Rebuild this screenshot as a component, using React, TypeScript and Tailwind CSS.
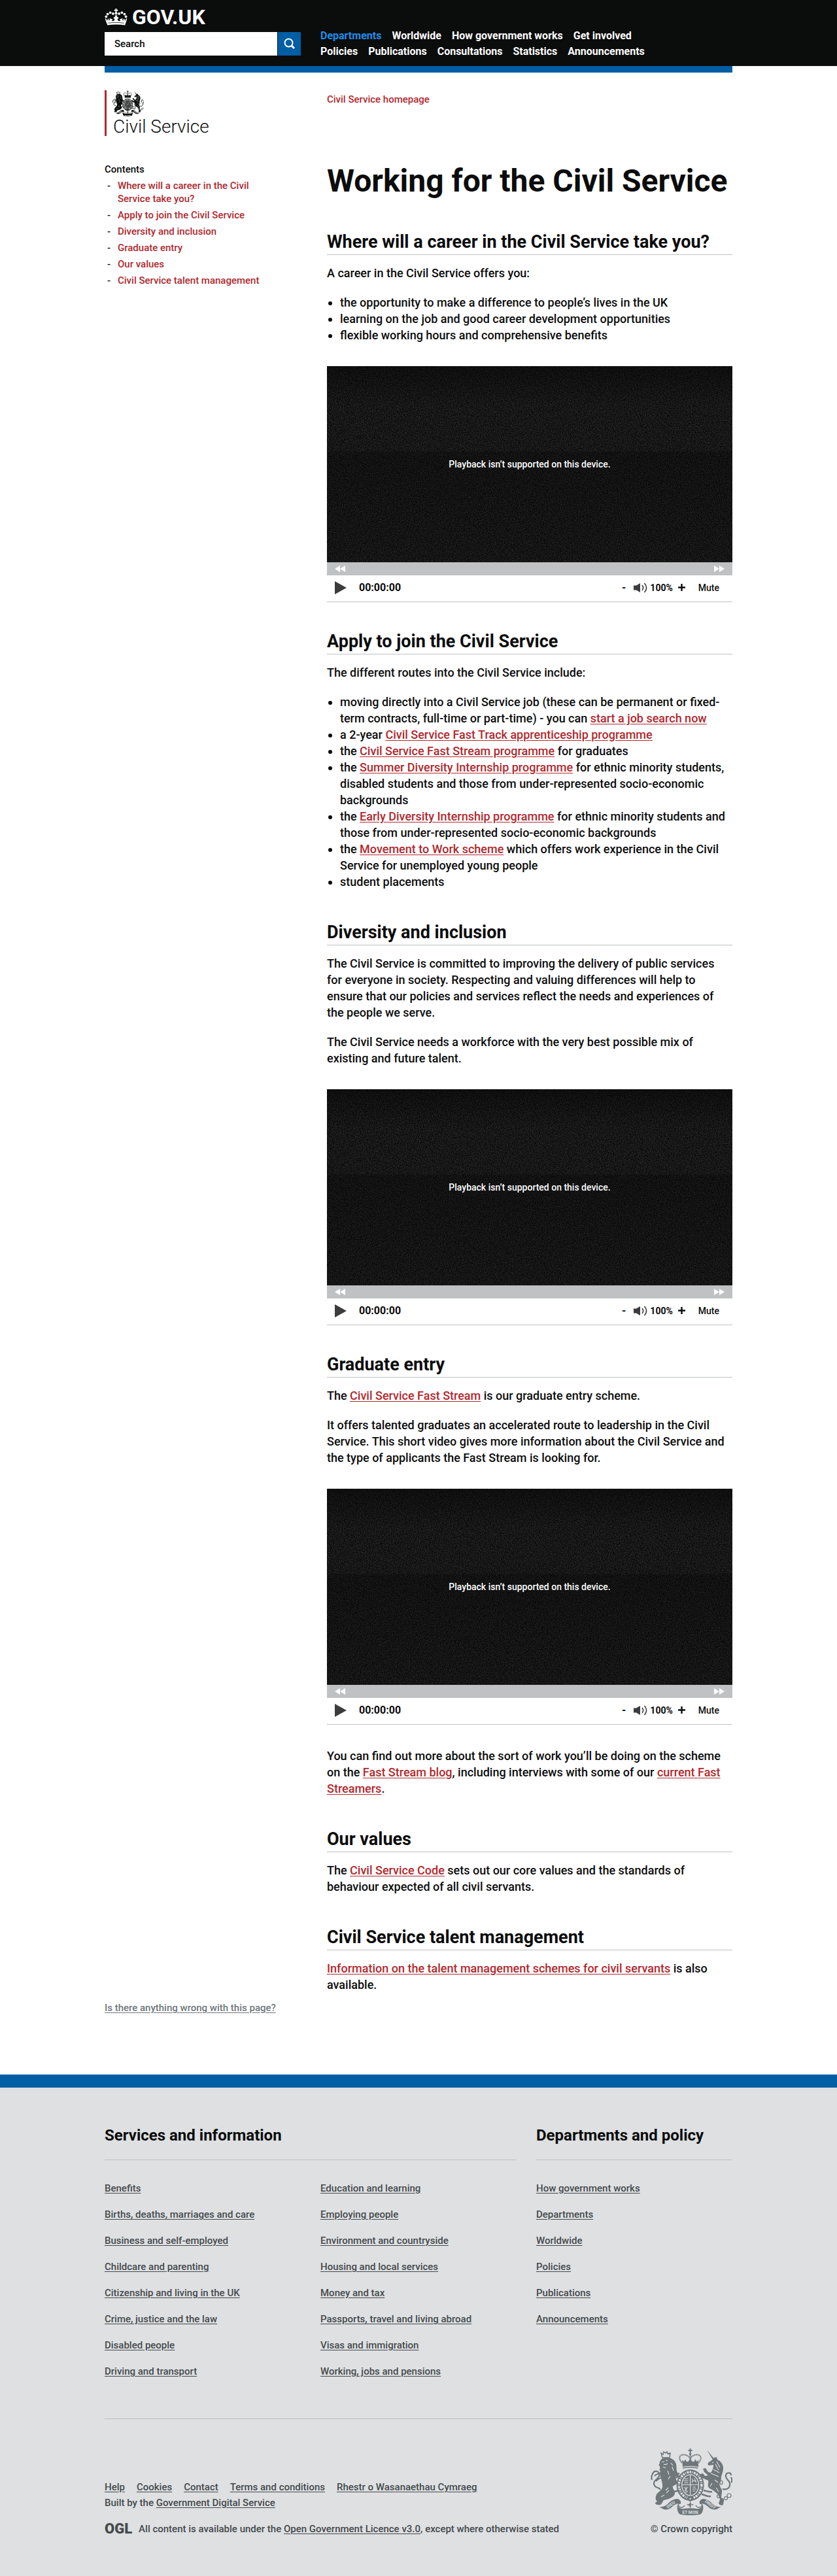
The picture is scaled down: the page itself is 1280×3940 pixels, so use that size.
import { useId, type ReactNode } from 'react';

const contents = [
  'Where will a career in the Civil Service take you?',
  'Apply to join the Civil Service',
  'Diversity and inclusion',
  'Graduate entry',
  'Our values',
  'Civil Service talent management',
];

const navRows = [
  ['Departments', 'Worldwide', 'How government works', 'Get involved'],
  ['Policies', 'Publications', 'Consultations', 'Statistics', 'Announcements'],
];

const services = [
  [
    'Benefits',
    'Births, deaths, marriages and care',
    'Business and self-employed',
    'Childcare and parenting',
    'Citizenship and living in the UK',
    'Crime, justice and the law',
    'Disabled people',
    'Driving and transport',
  ],
  [
    'Education and learning',
    'Employing people',
    'Environment and countryside',
    'Housing and local services',
    'Money and tax',
    'Passports, travel and living abroad',
    'Visas and immigration',
    'Working, jobs and pensions',
  ],
];

const policy = ['How government works', 'Departments', 'Worldwide', 'Policies', 'Publications', 'Announcements'];

const meta = ['Help', 'Cookies', 'Contact', 'Terms and conditions', 'Rhestr o Wasanaethau Cymraeg'];

function Crown() {
  return (
    <svg viewBox="0 0 35 26" className="h-[26px] w-[35px]" fill="#fff" aria-hidden="true">
      <path d="M16.4 0h2.2l-.4 2 2-.4v2.3l-2-.4.4 2.4h-2.2l.4-2.4-2 .4V1.600l2 .4z" />
      <circle cx="17.500" cy="7.600" r="2" />
      <circle cx="12.900" cy="7.900" r="1.900" />
      <circle cx="22.100" cy="7.900" r="1.900" />
      <circle cx="8.600" cy="6.300" r="1.900" />
      <circle cx="26.400" cy="6.300" r="1.900" />
      <circle cx="4.600" cy="8.600" r="1.900" />
      <circle cx="30.400" cy="8.600" r="1.900" />
      <circle cx="2.400" cy="12.400" r="1.900" />
      <circle cx="32.600" cy="12.400" r="1.900" />
      <path d="M1 14.500c1.500 1 2.200 2.600 2.900 5.100.2-1.600.3-3 1.600-4.300.9.900 1.100 2 .7 3.300.9-.2 1.500-.7 2-1.500-.8-.4-.7-1.600 0-2 1 0 1.400.5 1.500 1.300.8-.5 1.600-.6 2.100.2.500 1-.3 1.800-1.300 1.500.3 1 1.700 1.600 3.400.8 1-.7 1.500-1.800 1.500-3.300l-1.400.4v-3.200l2.100.6-.4-3h3.600l-.4 3 2.100-.6V16l-1.400-.4c0 1.500.5 2.600 1.500 3.300 1.700.8 3.100.2 3.400-.8-1 .3-1.800-.5-1.300-1.500.5-.8 1.300-.7 2.100-.2.100-.8.500-1.300 1.500-1.300.7.4.8 1.600 0 2 .5.800 1.100 1.300 2 1.500-.4-1.300-.2-2.400.7-3.300 1.300 1.300 1.400 2.700 1.600 4.300.7-2.500 1.400-4.100 2.900-5.100.2 3.700-1.700 6.600-2.800 11-8.800-1.300-18-1.300-26.800 0C2.800 21.100.8 18.200 1 14.500z" />
      <path d="M5.500 22.300c8-1.200 16-1.200 24 0" fill="none" stroke="#0b0c0c" strokeWidth=".8" />
    </svg>
  );
}

/* Royal coat of arms: lion and unicorn holding a crowned garter above the motto scroll. */
function Crest({ className, ground }: { className: string; ground: string }) {
  return (
    <svg viewBox="0 0 125 102" className={className} fill="currentColor" aria-hidden="true">
      {/* crown */}
      <path d="M59.600 0h2v2h2v2h-2v3h-2V4h-2V2h2z" />
      <circle cx="60.600" cy="8.500" r="1.800" />
      <path
        d="M48 22c-7-8-3-13 3-12.500 4 .3 8 2.500 9.600 6C62.200 12 66 9.800 70 9.500c6-.5 10 4.500 3.200 12.500M60.600 10v13"
        fill="none"
        stroke="currentColor"
        strokeWidth="2"
        strokeDasharray="1.800 .7"
      />
      <path d="M48.500 22.500l-.5-5 3 2.500 2-3.500 2 4 3-1 2.600-4.500 2.600 4.500 3 1 2-4 2 3.500 3-2.500-.5 5 .5 5.500c-8-1.600-16.200-1.600-24.200 0z" />
      <path d="M49 30c8-1.800 15.500-1.800 23.500 0" fill="none" stroke="currentColor" strokeWidth="1.600" />
      {/* garter and shield */}
      <ellipse cx="60.600" cy="56" rx="21" ry="24" />
      <ellipse cx="60.600" cy="56" rx="17.300" ry="20" fill="none" stroke={ground} strokeWidth="3.400" strokeDasharray="2.600 1.600 1 1.400 3 1.200" />
      <ellipse cx="60.600" cy="56" rx="13.500" ry="16.500" fill={ground} />
      <ellipse cx="60.600" cy="56" rx="12.200" ry="15.200" />
      <path d="M60.600 41v30M48.500 55.500h24.200" stroke={ground} strokeWidth="1.200" />
      <path
        d="M51.500 46.500h6M50.500 49.500h7M51.500 52.500h6M64 46v7M67 45.500l2.500 7M64 49.500h6M64 59h5M64 62h6M64 65h4M51 59l6 8M54 58v10M57 59l-5 6"
        fill="none"
        stroke={ground}
        strokeWidth="1"
      />
      <path d="M55 76l5.600 6 5.600-6-2-2h-7.200z" />
      <circle cx="60.600" cy="77" r="1.200" fill={ground} />
      {/* lion */}
      <path d="M18 14l-2-7 3 2 1-4 3 2 2-2 1 3 4-1-1 7z" fill="none" stroke="currentColor" strokeWidth="1.500" />
      <path d="M18 15c4-1.500 9-1.600 13 0 4 1.500 7 5 8 9 1 5 0 9 2 13 1 2 3 4 2 6-2 1-4-1-5 0l1 5c2 2 2 5 0 7-2 1.500-4 1-5 3-1 3 3 6 3 10 0 5-5 7-9 9l-8 2c-2 2-2 5-5 7-3 .5-7 .2-8-2 0-2 2-2 3-3-2-2-3-5-2-8 1-5 6-7 9-11 2-4 1-8 0-12-1-6-4-10-2-16l-2-1c2-2 1-4 1-6-2-1-2-3 0-4-1-3 1-5 4-8z" />
      <path d="M17 21l4-1M20 24c2 1 4 1 6-1M23 18l3 1M19 28l4 2M26 34l2 6M33 28l2 6M30 42l-3 5M27 60l-4 4M16 74l5-3M24 68l4-4M31 22l3 4" fill="none" stroke={ground} strokeWidth="1.100" />
      <path d="M20 38c-6-1-10 0-14 4M19 44c-5 1-8 3-11 6" fill="none" stroke="currentColor" strokeWidth="2" />
      <path d="M2 48C0 42 4 33 10 35c5 2 4 8 0 11-5 4-7 8-3 12 3 3 6 1 8 5" fill="none" stroke="currentColor" strokeWidth="2.200" />
      <path d="M44 38l-8 3M44 42l-6 3M44 64l-8 2" stroke="currentColor" strokeWidth="2.500" />
      {/* unicorn */}
      <path d="M86 2l13 16-2.500 1.500z" />
      <path d="M98 14l3-1 1 4c5 2 9 7 9 13 0 5-2 9-3 13 0 5-1 8-3 11l2 6c4 4 1 10 1 15l4 4-1 7c-3 2-6 0-7-2l2-6-3-8-6-5c-3-3-8-3-9-7-1-3 1-6 0-9l-7-3c-3-1-5-4-5-7l4-1 3 4 5-1-6-5-2-5 4-1 4 6 4 1c3-4 4-8 4-12l-7 1c-2-1-2-4 0-5 4-2 6-5 9-8z" />
      <path d="M94 22l2-1M101 20l5 9M99 24l5 9M96 32l9 5M92 38l12 5M98 48l5 4M94 53l-3 5M100 60l4 6" fill="none" stroke={ground} strokeWidth="1.100" />
      <path d="M110 62c8 2 12-3 11-9-1-5-7-6-6-12 1-5 8-5 8 0M123 44c2 4 1 7 0 8" fill="none" stroke="currentColor" strokeWidth="2.200" />
      <path d="M81 64c5 1 8 3 13 2M78 70c5 1 8 4 14 3" fill="none" stroke="currentColor" strokeWidth="2.500" />
      <g fill="none" stroke="currentColor" strokeWidth="1.200">
        <circle cx="104" cy="73" r="2.500" />
        <circle cx="109" cy="79" r="2.500" />
        <circle cx="115" cy="76" r="2.500" />
        <circle cx="120" cy="72" r="3" />
        <ellipse cx="108" cy="52" rx="2" ry="3" />
      </g>
      {/* scroll */}
      <path d="M13 89c6 1 9-1 13-4 4-4 8-8 15-8 4 1 6 4 5 7-6 0-10 2-14 6-3 3-8 4-12 3z" />
      <path d="M108 89c-6 1-9-1-13-4-4-4-8-8-15-8-4 1-6 4-5 7 6 0 10 2 14 6 3 3 8 4 12 3z" />
      <path d="M41 86c2 5 6 7 10 6 6-1 13-1 19 0 4 1 8-1 10-6 1 6 0 13-5 15-9 1.500-20 1.500-29 0-5-2-6-9-5-15z" />
      <path d="M46 84c-4 0-5 3-2 5s7 1 8-2M75 84c4 0 5 3 2 5s-7 1-8-2" fill="none" stroke="currentColor" strokeWidth="1.400" />
      <path d="M60.600 82l2.500 4-2.500 5-2.500-5zM55 86c2-2 4-1 5 2M66 86c-2-2-4-1-5 2" fill="currentColor" />
      <g fill={ground} fontFamily="Roboto" fontWeight="700" fontSize="6.500" textAnchor="middle">
        <text x="60.600" y="100">ET MON</text>
        <text x="31" y="88" transform="rotate(-35 31 86)">DIEU</text>
        <text x="91" y="88" transform="rotate(38 91 86)">DROIT</text>
      </g>
    </svg>
  );
}

function A({ children }: { children: ReactNode }) {
  return (
    <a href="#" className="text-[#af292e] underline underline-offset-2">
      {children}
    </a>
  );
}

function H2({ children, className = 'mt-[50px]' }: { children: ReactNode; className?: string }) {
  return (
    <h2 className={`${className} mb-[15px] border-b border-[#bfc1c3] pb-1 text-[27px] leading-[30px] font-bold`}>
      {children}
    </h2>
  );
}

function P({ children }: { children: ReactNode }) {
  return <p className="mb-5 max-w-[610px]">{children}</p>;
}

function List({ children }: { children: ReactNode }) {
  return <ul className="mb-5 list-disc pl-5">{children}</ul>;
}

function Player() {
  const id = useId();
  return (
    <div className="my-[35px] border-b border-[#bfc1c3]">
      <div className="relative h-[300px] bg-[#111]">
        <svg className="h-full w-full" aria-hidden="true">
          <filter id={id} x="0" y="0" width="100%" height="100%" colorInterpolationFilters="sRGB">
            <feTurbulence type="fractalNoise" baseFrequency="0.72" numOctaves="2" seed="4" />
            <feColorMatrix values=".3 0 0 0 -.06  .3 0 0 0 -.06  .3 0 0 0 -.06  0 0 0 0 1" />
          </filter>
          <linearGradient id={`${id}g`} x1="0" y1="0" x2="0" y2="1">
            <stop offset="0" stopColor="#000" stopOpacity=".4" />
            <stop offset=".2" stopColor="#000" stopOpacity="0" />
            <stop offset=".43" stopColor="#000" stopOpacity="0" />
            <stop offset=".44" stopColor="#000" stopOpacity=".25" />
            <stop offset="1" stopColor="#000" stopOpacity=".1" />
          </linearGradient>
          <rect width="100%" height="100%" filter={`url(#${id})`} />
          <rect width="100%" height="100%" fill={`url(#${id}g)`} />
        </svg>
        <p className="absolute inset-0 flex items-center justify-center text-sm font-medium text-white">
          Playback isn’t supported on this device.
        </p>
      </div>
      <div className="flex h-5 items-center justify-between bg-[#bfc1c3] px-3">
        <button type="button" aria-label="Rewind">
          <svg viewBox="0 0 16 10" className="h-[10px] w-4" fill="#fff">
            <path d="M8 0v10L0 5zM16 0v10L8 5z" />
          </svg>
        </button>
        <button type="button" aria-label="Fast forward">
          <svg viewBox="0 0 16 10" className="h-[10px] w-4" fill="#fff">
            <path d="M0 0v10l8-5zM8 0v10l8-5z" />
          </svg>
        </button>
      </div>
      <div className="flex h-10 items-center pr-5 pb-[3px] pl-3 text-sm font-bold">
        <button type="button" aria-label="Play" className="mr-[19px]">
          <svg viewBox="0 0 18 20" className="h-5 w-[18px]" fill="#3c3c3c">
            <path d="M0 0v20l18-10z" />
          </svg>
        </button>
        <span className="grow text-base">00:00:00</span>
        <button type="button" aria-label="Volume down" className="mr-3 text-base">
          -
        </button>
        <svg viewBox="0 0 21 16" className="mr-1 h-4 w-[21px]" fill="#3c3c3c" aria-hidden="true">
          <path d="M0 4.500h4L10 1v14l-6-3.500H0z" />
          <path d="M13 4c2 2.500 2 5.500 0 8M16.500 1c4 4.500 4 9.500 0 14" fill="none" stroke="#3c3c3c" strokeWidth="1.600" />
        </svg>
        <span>100%</span>
        <button type="button" aria-label="Volume up" className="mx-2">
          <svg viewBox="0 0 11 11" className="size-[11px]" stroke="#0b0c0c" strokeWidth="2.400">
            <path d="M5.500 0v11M0 5.500h11" />
          </svg>
        </button>
        <button type="button" className="ml-3 font-medium">
          Mute
        </button>
      </div>
    </div>
  );
}

function FooterLinks({ items }: { items: string[] }) {
  return (
    <ul className="flex flex-1 flex-col gap-5">
      {items.map((t) => (
        <li key={t}>
          <a href="#" className="underline underline-offset-2">
            {t}
          </a>
        </li>
      ))}
    </ul>
  );
}

export default function App() {
  return (
    <div className="bg-white font-[Roboto,sans-serif] text-[15px] leading-5 font-medium text-[#0b0c0c]">
      <header className="bg-[#0b0c0c]">
        <div className="mx-auto flex max-w-[960px] gap-[30px]">
          <div className="w-[300px] pb-4">
            <a href="#" className="flex items-center gap-[7px] pt-3 text-[32px] leading-7 font-bold text-white">
              <Crown />
              GOV.UK
            </a>
            <form className="mt-[9px] flex h-9 gap-px">
              <input
                type="text"
                aria-label="Search"
                placeholder="Search"
                className="min-w-0 grow bg-white px-[15px] placeholder:text-[#0b0c0c]"
              />
              <button type="submit" aria-label="Search GOV.UK" className="flex w-[35px] items-center justify-center bg-[#005ea5]">
                <svg viewBox="0 0 18 18" className="size-[18px]" fill="none" stroke="#fff" strokeWidth="2">
                  <circle cx="7.500" cy="7.500" r="6" />
                  <path d="M12 12l4 4" strokeWidth="3" />
                </svg>
              </button>
            </form>
          </div>
          <nav className="mt-[43px] text-base leading-6 font-bold text-white">
            {navRows.map((row) => (
              <ul key={row[0]} className="flex gap-4">
                {row.map((t) => (
                  <li key={t}>
                    <a href="#" className={t === 'Departments' ? 'text-[#1d8feb]' : ''}>
                      {t}
                    </a>
                  </li>
                ))}
              </ul>
            ))}
          </nav>
        </div>
      </header>

      <main className="mx-auto max-w-[960px] border-t-10 border-[#005ea5]">
        <div className="flex gap-5 pt-[27px]">
          <aside className="w-1/3">
            <a href="#" className="flex h-[70px] flex-col justify-between border-l-3 border-[#af292e] pl-[9px]">
              <Crest className="h-10 w-12" ground="#fff" />
              <span className="pl-px text-[28px] leading-7 font-light">Civil Service</span>
            </a>
            <nav className="mt-[41px] w-[260px]" aria-label="Contents">
              <h2 className="mb-[5px]">Contents</h2>
              <ol className="flex flex-col gap-[5px] pl-1">
                {contents.map((t) => (
                  <li key={t} className="flex">
                    <span className="w-4 shrink-0">-</span>
                    <a href="#" className="max-w-[230px] text-[#af292e]">
                      {t}
                    </a>
                  </li>
                ))}
              </ol>
            </nav>
          </aside>
          <article className="min-w-0 flex-1 pt-1 text-lg leading-[25px]">
            <a href="#" className="block text-[15px] leading-5 text-[#af292e]">
              Civil Service homepage
            </a>
            <h1 className="mt-[90px] mb-[53px] text-5xl leading-[50px] font-bold">Working for the Civil Service</h1>

            <H2>Where will a career in the Civil Service take you?</H2>
            <P>A career in the Civil Service offers you:</P>
            <List>
              <li>the opportunity to make a difference to people’s lives in the UK</li>
              <li>learning on the job and good career development opportunities</li>
              <li>flexible working hours and comprehensive benefits</li>
            </List>
            <Player />

            <H2 className="mt-[45px]">Apply to join the Civil Service</H2>
            <P>The different routes into the Civil Service include:</P>
            <List>
              <li>
                moving directly into a Civil Service job (these can be permanent or fixed-term contracts, full-time or
                part-time) - you can <A>start a job search now</A>
              </li>
              <li>
                a 2-year <A>Civil Service Fast Track apprenticeship programme</A>
              </li>
              <li>
                the <A>Civil Service Fast Stream programme</A> for graduates
              </li>
              <li>
                the <A>Summer Diversity Internship programme</A> for ethnic minority students, disabled students and
                those from under-represented socio-economic backgrounds
              </li>
              <li>
                the <A>Early Diversity Internship programme</A> for ethnic minority students and those from
                under-represented socio-economic backgrounds
              </li>
              <li>
                the <A>Movement to Work scheme</A> which offers work experience in the Civil Service for unemployed
                young people
              </li>
              <li>student placements</li>
            </List>

            <H2>Diversity and inclusion</H2>
            <P>
              The Civil Service is committed to improving the delivery of public services for everyone in society.
              Respecting and valuing differences will help to ensure that our policies and services reflect the needs
              and experiences of the people we serve.
            </P>
            <P>
              The Civil Service needs a workforce with the very best possible mix of existing and future talent.
            </P>
            <Player />

            <H2 className="mt-[45px]">Graduate entry</H2>
            <P>
              The <A>Civil Service Fast Stream</A> is our graduate entry scheme.
            </P>
            <P>
              It offers talented graduates an accelerated route to leadership in the Civil Service. This short video
              gives more information about the Civil Service and the type of applicants the Fast Stream is looking for.
            </P>
            <Player />
            <P>
              You can find out more about the sort of work you’ll be doing on the scheme on the{' '}
              <A>Fast Stream blog</A>, including interviews with some of our <A>current Fast Streamers</A>.
            </P>

            <H2>Our values</H2>
            <P>
              The <A>Civil Service Code</A> sets out our core values and the standards of behaviour expected of all
              civil servants.
            </P>

            <H2>Civil Service talent management</H2>
            <p>
              <A>Information on the talent management schemes for civil servants</A> is also available.
            </p>
          </article>
        </div>
        <a href="#" className="mt-[13px] mb-[92px] block text-[#6f777b] underline underline-offset-2">
          Is there anything wrong with this page?
        </a>
      </main>

      <footer className="border-t-20 border-[#005ea5] bg-[#dee0e2] text-[#454a4c]">
        <div className="mx-auto max-w-[960px] pt-[58px] pb-[62px]">
          <div className="flex gap-[30px]">
            <section className="w-[630px]">
              <h2 className="mb-[33px] border-b border-[#bfc1c3] pb-[22px] text-2xl leading-[30px] font-bold text-[#0b0c0c]">
                Services and information
              </h2>
              <div className="flex gap-[30px]">
                {services.map((items) => (
                  <FooterLinks key={items[0]} items={items} />
                ))}
              </div>
            </section>
            <section className="flex-1">
              <h2 className="mb-[33px] border-b border-[#bfc1c3] pb-[22px] text-2xl leading-[30px] font-bold text-[#0b0c0c]">
                Departments and policy
              </h2>
              <FooterLinks items={policy} />
            </section>
          </div>
          <div className="mt-[62px] flex items-end justify-between border-t border-[#bfc1c3] pt-[45px]">
            <div>
              <ul className="flex gap-[18px] leading-6">
                {meta.map((t) => (
                  <li key={t}>
                    <a href="#" className="underline underline-offset-2">
                      {t}
                    </a>
                  </li>
                ))}
              </ul>
              <p className="leading-6">
                Built by the{' '}
                <a href="#" className="underline underline-offset-2">
                  Government Digital Service
                </a>
              </p>
              <div className="mt-[18px] flex gap-[10px]">
                <span className="text-[22px] leading-5 font-black">OGL</span>
                <p>
                  All content is available under the{' '}
                  <a href="#" className="underline underline-offset-2">
                    Open Government Licence v3.0
                  </a>
                  , except where otherwise stated
                </p>
              </div>
            </div>
            <a href="#" className="flex flex-col items-end gap-[11px]">
              <Crest className="h-[102px] w-[125px] text-[#6f777b]" ground="#dee0e2" />
              <span>© Crown copyright</span>
            </a>
          </div>
        </div>
      </footer>
    </div>
  );
}
